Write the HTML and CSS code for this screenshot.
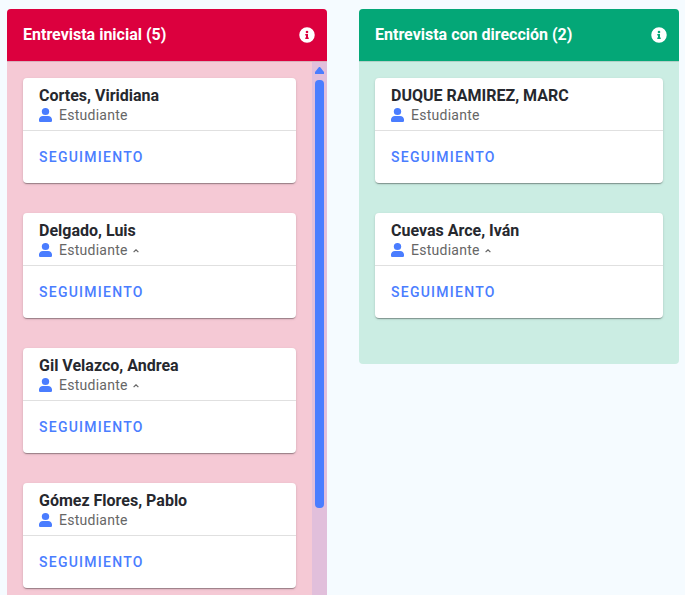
FILE: index.html
```html
<!DOCTYPE html>
<html lang="es">

<head>
    <meta charset="UTF-8" />
    <meta name="viewport" content="width=device-width, initial-scale=1" />
    <title>Entrevistas</title>
    <link rel="stylesheet" href="styles.css">
</head>

<body>
    <!-- Shared icons -->
    <svg class="icon-defs" aria-hidden="true">
        <symbol id="icon-user" viewBox="0 0 448 512" preserveAspectRatio="none">
            <path d="M224 256a128 128 0 1 0 0-256 128 128 0 0 0 0 256zm90 32H134C60 288 0 348 0 422v42c0 26 22 48 48 48h352c26 0 48-22 48-48v-42c0-74-60-134-134-134z" />
        </symbol>
        <symbol id="icon-info" viewBox="0 0 512 512">
            <path fill-rule="evenodd" d="M256 8a248 248 0 1 0 0 496 248 248 0 0 0 0-496zm0 110a42 42 0 1 1 0 84 42 42 0 0 1 0-84zm56 254c0 7-5 12-12 12h-88c-7 0-12-5-12-12v-24c0-7 5-12 12-12h12v-64h-12c-7 0-12-5-12-12v-24c0-7 5-12 12-12h64c7 0 12 5 12 12v100h12c7 0 12 5 12 12z" />
        </symbol>
        <symbol id="icon-caret" viewBox="0 0 10 6">
            <path d="M1 5l4-4 4 4" fill="none" stroke="currentColor" stroke-width="2" />
        </symbol>
    </svg>

    <main class="board">
        <section class="column column-red">
            <header class="column-header">
                <h2>Entrevista inicial (5)</h2>
                <button type="button" class="info-button" aria-label="Información"><svg><use href="#icon-info" /></svg></button>
            </header>
            <div class="column-body">
                <div class="card-list">
                    <article class="card">
                        <div class="card-info">
                            <h3>Cortes, Viridiana</h3>
                            <p><svg class="user"><use href="#icon-user" /></svg>Estudiante</p>
                        </div>
                        <div class="card-actions"><button type="button">SEGUIMIENTO</button></div>
                    </article>
                    <article class="card">
                        <div class="card-info">
                            <h3>Delgado, Luis</h3>
                            <p><svg class="user"><use href="#icon-user" /></svg>Estudiante<svg class="caret"><use href="#icon-caret" /></svg></p>
                        </div>
                        <div class="card-actions"><button type="button">SEGUIMIENTO</button></div>
                    </article>
                    <article class="card">
                        <div class="card-info">
                            <h3>Gil Velazco, Andrea</h3>
                            <p><svg class="user"><use href="#icon-user" /></svg>Estudiante<svg class="caret"><use href="#icon-caret" /></svg></p>
                        </div>
                        <div class="card-actions"><button type="button">SEGUIMIENTO</button></div>
                    </article>
                    <article class="card">
                        <div class="card-info">
                            <h3>Gómez Flores, Pablo</h3>
                            <p><svg class="user"><use href="#icon-user" /></svg>Estudiante</p>
                        </div>
                        <div class="card-actions"><button type="button">SEGUIMIENTO</button></div>
                    </article>
                </div>
                <div class="scrollbar" aria-hidden="true">
                    <svg class="scroll-up" viewBox="0 0 9 7"><path d="M4 0h1l4 5v2H0V5z" /></svg>
                    <div class="scroll-thumb"></div>
                </div>
            </div>
        </section>

        <section class="column column-green">
            <header class="column-header">
                <h2>Entrevista con dirección (2)</h2>
                <button type="button" class="info-button" aria-label="Información"><svg><use href="#icon-info" /></svg></button>
            </header>
            <div class="column-body">
                <div class="card-list">
                    <article class="card">
                        <div class="card-info">
                            <h3>DUQUE RAMIREZ, MARC</h3>
                            <p><svg class="user"><use href="#icon-user" /></svg>Estudiante</p>
                        </div>
                        <div class="card-actions"><button type="button">SEGUIMIENTO</button></div>
                    </article>
                    <article class="card">
                        <div class="card-info">
                            <h3>Cuevas Arce, Iván</h3>
                            <p><svg class="user"><use href="#icon-user" /></svg>Estudiante<svg class="caret"><use href="#icon-caret" /></svg></p>
                        </div>
                        <div class="card-actions"><button type="button">SEGUIMIENTO</button></div>
                    </article>
                </div>
            </div>
        </section>
    </main>
</body>

</html>
```

FILE: styles.css
```css
* {
    box-sizing: border-box;
}

body {
    margin: 0;
    background-color: #f5fbff;
    font-family: Roboto, "Liberation Sans", sans-serif;
    color: #26282e;
}

h2,
h3,
p {
    margin: 0;
}

button {
    padding: 0;
    border: none;
    background: none;
    font-family: inherit;
    cursor: pointer;
}

svg {
    fill: currentColor;
}

.icon-defs {
    display: none;
}

.board {
    display: grid;
    grid-template-columns: 1fr 1fr;
    gap: 32px;
    align-items: start;
    height: 100vh;
    padding: 9px 6px 0 7px;
}

.column {
    display: flex;
    flex-direction: column;
    max-height: calc(100vh - 9px);
    border-radius: 4px;
    overflow: hidden;
}

.column-red {
    background-color: #f5c9d5;
    border-radius: 4px 4px 0 0;
}

.column-green {
    background-color: #cbede3;
}

.column-header {
    display: flex;
    flex: none;
    align-items: center;
    justify-content: space-between;
    height: 52px;
    padding: 0 12px 0 16px;
    color: white;
}

.column-red .column-header {
    background-color: #dc003e;
}

.column-green .column-header {
    background-color: #04a777;
}

.column-header h2 {
    font-size: 16px;
    font-weight: 700;
    line-height: 24px;
}

.info-button {
    display: flex;
    color: white;
}

.info-button svg {
    width: 16px;
    height: 16px;
}

.column-body {
    display: flex;
    min-height: 0;
    border-top: 1px solid rgba(0, 0, 0, 0.12);
}

.card-list {
    flex: 1;
    min-width: 0;
    padding: 16px;
    overflow-y: auto;
    scrollbar-width: none;
}

.card {
    margin-bottom: 30px;
    background-color: white;
    border-radius: 4px;
    box-shadow: 0 2px 1px -1px rgba(0, 0, 0, 0.2), 0 1px 1px rgba(0, 0, 0, 0.14), 0 1px 3px rgba(0, 0, 0, 0.12);
}

.card-info {
    height: 53px;
    padding: 8px 16px 0;
    border-bottom: 1px solid #e0e0e0;
}

.card-info h3 {
    font-size: 16px;
    font-weight: 700;
    line-height: 20px;
}

.card-info p {
    display: flex;
    align-items: center;
    font-size: 14px;
    line-height: 18px;
    letter-spacing: 0.25px;
    color: #666;
}

.user {
    width: 13px;
    height: 14px;
    margin-right: 7px;
    color: #4a7dff;
}

.caret {
    width: 6px;
    height: 4px;
    margin: 2px 0 0 5px;
}

.card-actions {
    display: flex;
    align-items: center;
    height: 52px;
    padding: 0 16px;
}

.card-actions button {
    font-size: 14px;
    font-weight: 500;
    line-height: 20px;
    letter-spacing: 1.25px;
    color: #4a7dff;
}

.scrollbar {
    display: flex;
    flex-direction: column;
    align-items: center;
    gap: 6px;
    width: 15px;
    padding-top: 5px;
    background-color: #e1bfdb;
}

.scroll-up {
    flex: none;
    width: 9px;
    height: 7px;
    color: #4a7dff;
}

.scroll-thumb {
    width: 9px;
    height: 81%;
    border-radius: 4px;
    background-color: #4a7dff;
}
```
